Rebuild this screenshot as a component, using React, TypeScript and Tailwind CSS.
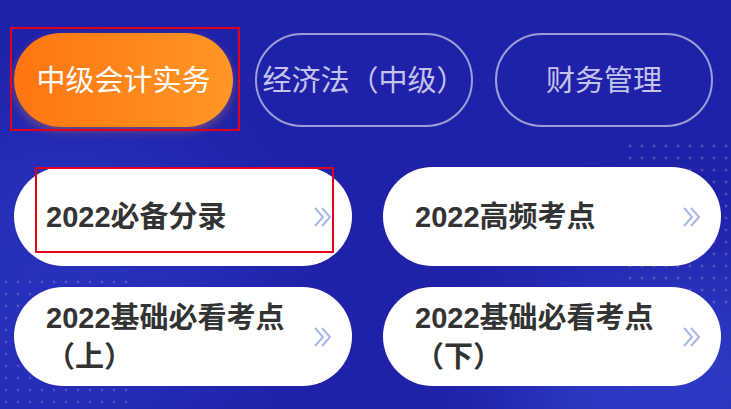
import React from "react";

const tabs = ["中级会计实务", "经济法（中级）", "财务管理"];

const cards = [
  { id: 1, lines: ["2022必备分录"], marked: true },
  { id: 2, lines: ["2022高频考点"] },
  { id: 3, lines: ["2022基础必看考点", "（上）"] },
  { id: 4, lines: ["2022基础必看考点", "（下）"] },
];

const Chevrons = () => (
  <svg width="22" height="24" viewBox="0 0 22 24" fill="none" stroke="#a9b6e6" strokeWidth="2">
    <path d="M3 3l8 9-8 9" />
    <path d="M10 3l8 9-8 9" />
  </svg>
);

export default function App() {
  return (
    <div className="relative w-[731px] h-[409px] overflow-hidden bg-[#2021a9] font-['Liberation_Sans','Noto_Sans_CJK_SC',sans-serif]">
      {/* background glow + dots */}
      <div className="absolute -left-[120px] top-[120px] w-[360px] h-[320px] rounded-full bg-[#2d3bc8] opacity-60 blur-[60px]" />
      <div className="absolute right-[-80px] bottom-[-80px] w-[300px] h-[220px] rounded-full bg-[#3344d0] opacity-70 blur-[50px]" />
      <div className="absolute left-[624px] top-[140px] w-[110px] h-[170px] bg-[radial-gradient(circle,rgba(255,255,255,0.22)_1.5px,transparent_1.6px)] bg-[length:12px_12px]" />
      <div className="absolute left-0 top-[276px] w-[136px] h-[140px] bg-[radial-gradient(circle,rgba(255,255,255,0.18)_1.5px,transparent_1.6px)] bg-[length:12px_12px]" />

      <div className="relative">
        {/* subject tabs */}
        <div className="flex gap-[22px] pt-[33px] pl-[14px]">
          {tabs.map((t, i) =>
            i === 0 ? (
              <div
                key={t}
                className="relative flex items-center justify-center w-[219px] h-[94px] pt-[4px] rounded-full bg-gradient-to-r from-[#ff7510] to-[#ff9624] text-white text-[29px] shadow-[0_4px_10px_rgba(255,140,40,0.35)]"
              >
                {t}
                <span className="absolute -left-[4px] -top-[6px] w-[230px] h-[104px] border-2 border-[#e3001b]" />
              </div>
            ) : (
              <div
                key={t}
                className="flex items-center justify-center w-[218px] h-[94px] pt-[4px] rounded-full border-2 border-[#9c9ed8] text-[#c3c4ee] text-[29px] whitespace-nowrap"
              >
                {t}
              </div>
            )
          )}
        </div>

        {/* resource cards */}
        <div className="grid grid-cols-[338px_338px] gap-x-[31px] gap-y-[21px] pt-[40px] pl-[14px]">
          {cards.map((c) => (
            <div
              key={c.id}
              className="relative flex items-center justify-between h-[99px] rounded-full bg-white pl-[32px] pr-[18px]"
            >
              <div className="text-[#333333] text-[29px] font-bold leading-[39px] pt-[2px]">
                {c.lines.map((l, i) => (
                  <div key={i}>{l}</div>
                ))}
              </div>
              <Chevrons />
              {c.marked && (
                <span className="absolute left-[21px] top-0 w-[299px] h-[86px] border-2 border-[#e3001b]" />
              )}
            </div>
          ))}
        </div>
      </div>
    </div>
  );
}
